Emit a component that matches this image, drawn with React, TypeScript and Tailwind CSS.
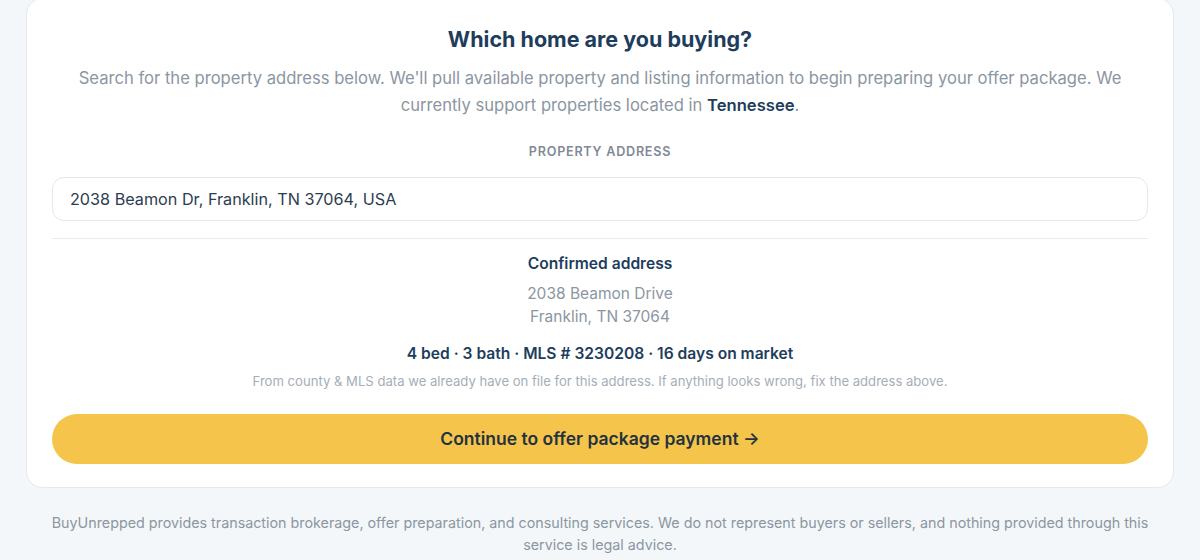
export default function App() {
  return (
    <div
      className="min-h-[560px] w-full bg-[#f4f7f9] px-[26px] overflow-hidden"
      style={{ fontFamily: 'Inter, "Noto Sans", sans-serif' }}
    >
      <div className="-mt-[2px] rounded-2xl border border-[#e3e9ef] bg-white px-[25px] pt-[26px] pb-[23px]">
        <h1 className="text-center text-[21.5px] font-bold leading-[28px] text-[#1e3d5c]">
          Which home are you buying?
        </h1>
        <p className="mx-auto mt-[12px] max-w-[1080px] text-center text-[16.6px] leading-[27px] text-[#8b96a2]">
          Search for the property address below. We'll pull available property and listing information to begin
          preparing your offer package. We currently support properties located in{' '}
          <span className="font-semibold text-[#1e3d5c]">Tennessee</span>.
        </p>

        <div className="mt-[25px] text-center text-[12.6px] font-semibold uppercase leading-[16px] tracking-[0.06em] text-[#7f8a96]">
          Property address
        </div>
        <div className="mt-[17px] flex h-[44px] items-center rounded-xl border border-[#e2e8ef] px-[17px] text-[16.2px] text-[#2b3d50]">
          2038 Beamon Dr, Franklin, TN 37064, USA
        </div>

        <div className="mt-[17px] border-t border-[#e6ebf0]" />

        <div className="mt-[14px] text-center">
          <div className="text-[15.6px] font-semibold leading-[22px] text-[#1e3d5c]">Confirmed address</div>
          <div className="mt-[7px] text-[15.5px] leading-[23px] text-[#8b96a2]">
            <div>2038 Beamon Drive</div>
            <div>Franklin, TN 37064</div>
          </div>
          <div className="mt-[15px] text-[15.6px] font-semibold leading-[22px] text-[#1e3d5c]">
            4 bed · 3 bath · MLS # 3230208 · 16 days on market
          </div>
          <div className="mt-[8px] text-[13.1px] leading-[16px] text-[#a5aeb8]">
            From county &amp; MLS data we already have on file for this address. If anything looks wrong, fix the address above.
          </div>
        </div>

        <button className="mt-[25px] flex h-[50px] w-full items-center justify-center rounded-full bg-[#f5c54b] text-[17.5px] font-semibold text-[#243240]">
          Continue to offer package payment →
        </button>
      </div>

      <p className="mx-auto mt-[24px] max-w-[1120px] text-center text-[14.3px] leading-[22px] text-[#8b96a2]">
        BuyUnrepped provides transaction brokerage, offer preparation, and consulting services. We do not represent
        buyers or sellers, and nothing provided through this service is legal advice.
      </p>
    </div>
  );
}
